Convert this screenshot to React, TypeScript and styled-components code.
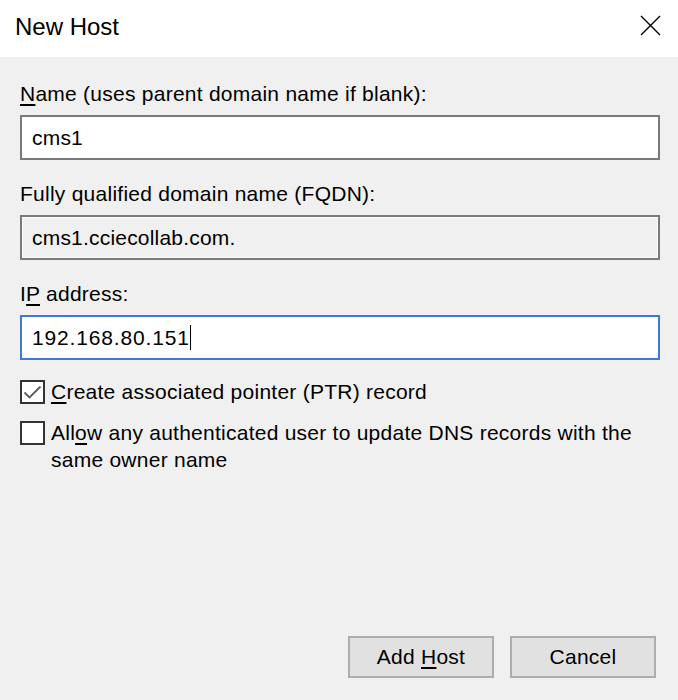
import React from "react";
import styled, { createGlobalStyle } from "styled-components";

const Global = createGlobalStyle`
  html, body { margin: 0; padding: 0; background: #f0f0f0; }
  body { font-family: "Liberation Sans", Arial, sans-serif; }
`;

const Dialog = styled.div`
  width: 678px;
  height: 700px;
  display: flex;
  flex-direction: column;
  background: #f0f0f0;
  color: #000;
  font-family: "Liberation Sans", Arial, sans-serif;
  font-size: 21px;
  letter-spacing: 0.25px;
  overflow: hidden;
`;

const TitleBar = styled.div`
  height: 57px;
  flex: none;
  background: #fff;
  display: flex;
  align-items: center;
  justify-content: space-between;
  padding: 0 17px 0 15px;
  box-sizing: border-box;
`;

const Title = styled.div`
  font-size: 24px;
  letter-spacing: 0;
  padding-bottom: 3px;
`;

const CloseIcon = styled.svg`
  width: 21px;
  height: 21px;
  display: block;
  margin-bottom: 6px;
`;

const Body = styled.div`
  flex: 1;
  display: flex;
  flex-direction: column;
  padding: 25px 18px 22px 20px;
`;

const Form = styled.div`
  display: flex;
  flex-direction: column;
  gap: 22px;
`;

const Field = styled.div`
  display: flex;
  flex-direction: column;
  gap: 9px;
`;

const Label = styled.div`
  line-height: 24px;
`;

const Key = styled.span`
  text-decoration: underline;
  text-underline-offset: 3px;
`;

const Box = styled.div<{ $variant: "normal" | "readonly" | "focus" }>`
  height: 45px;
  box-sizing: border-box;
  display: flex;
  align-items: center;
  padding-left: 10px;
  border: 2px solid
    ${(p) => (p.$variant === "focus" ? "#3a7bd5" : "#7a7a7a")};
  background: ${(p) => (p.$variant === "readonly" ? "#f0f0f0" : "#ffffff")};
  box-shadow: ${(p) =>
    p.$variant === "readonly" ? "inset 0 0 0 1px #fbfbfb" : "none"};
  letter-spacing: ${(p) => (p.$variant === "focus" ? "0.85px" : "0.2px")};
  white-space: pre;
`;

const Caret = styled.span`
  display: inline-block;
  width: 1px;
  height: 25px;
  background: #000;
`;

const Checks = styled.div`
  display: flex;
  flex-direction: column;
  gap: 16px;
  margin-top: 20px;
`;

const CheckRow = styled.div`
  display: flex;
  align-items: flex-start;
  gap: 6px;
`;

const CheckBox = styled.div`
  width: 25px;
  height: 24px;
  flex: none;
  box-sizing: border-box;
  border: 2px solid #333;
  background: #fff;
  display: flex;
  align-items: center;
  justify-content: center;
`;

const CheckText = styled.div`
  line-height: 27px;
  margin-top: -2px;
`;

const Spacer = styled.div`
  flex: 1;
`;

const Buttons = styled.div`
  display: flex;
  justify-content: flex-end;
  gap: 16px;
  padding-right: 4px;
`;

const Button = styled.div`
  width: 146px;
  height: 42px;
  box-sizing: border-box;
  border: 2px solid #adadad;
  background: #e1e1e1;
  display: flex;
  align-items: center;
  justify-content: center;
`;

export default function App() {
  return (
    <>
      <Global />
      <Dialog>
        <TitleBar>
          <Title>New Host</Title>
          <CloseIcon viewBox="0 0 21 21">
            <path d="M1 1 L20 20 M20 1 L1 20" stroke="#000" strokeWidth="1.4" fill="none" />
          </CloseIcon>
        </TitleBar>
        <Body>
          <Form>
            <Field>
              <Label>
                <Key>N</Key>ame (uses parent domain name if blank):
              </Label>
              <Box $variant="normal">cms1</Box>
            </Field>
            <Field>
              <Label>Fully qualified domain name (FQDN):</Label>
              <Box $variant="readonly">cms1.cciecollab.com.</Box>
            </Field>
            <Field>
              <Label>
                I<Key>P</Key> address:
              </Label>
              <Box $variant="focus">
                192.168.80.151
                <Caret />
              </Box>
            </Field>
          </Form>
          <Checks>
            <CheckRow>
              <CheckBox>
                <svg width="19" height="15" viewBox="0 0 19 15">
                  <path d="M1.5 7.5 L6.5 12.5 L17.5 1.5" stroke="#5a5a5a" strokeWidth="1.8" fill="none" />
                </svg>
              </CheckBox>
              <CheckText>
                <Key>C</Key>reate associated pointer (PTR) record
              </CheckText>
            </CheckRow>
            <CheckRow>
              <CheckBox />
              <CheckText>
                All<Key>o</Key>w any authenticated user to update DNS records with the
                <br />
                same owner name
              </CheckText>
            </CheckRow>
          </Checks>
          <Spacer />
          <Buttons>
            <Button>
              Add&nbsp;<Key>H</Key>ost
            </Button>
            <Button>Cancel</Button>
          </Buttons>
        </Body>
      </Dialog>
    </>
  );
}
